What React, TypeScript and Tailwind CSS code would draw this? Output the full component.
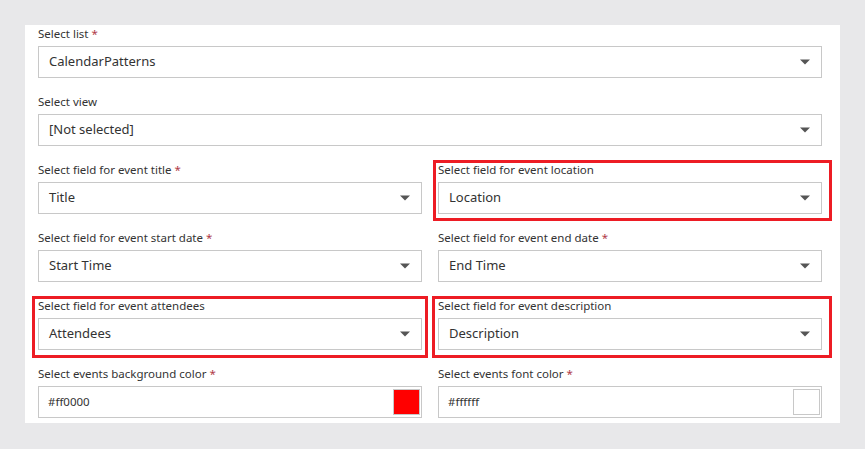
import React from "react";

type Field = {
  label: string;
  required?: boolean;
  value: string;
  kind: "select" | "color";
  swatch?: string;
  highlight?: "loc" | "att" | "desc";
};

function Caret() {
  return (
    <svg width="10" height="6" viewBox="0 0 10 6" className="shrink-0">
      <path d="M0 0.5 L10 0.5 L5 5.5 Z" fill="#555555" />
    </svg>
  );
}

function FieldView({ f }: { f: Field }) {
  return (
    <div className="relative flex flex-col">
      {f.highlight === "loc" && (
        <div className="pointer-events-none absolute left-[-5px] right-[-10px] top-[-2px] bottom-[-7px] border-[3px] border-[#ed1c24]" />
      )}
      {f.highlight === "att" && (
        <div className="pointer-events-none absolute left-[-6px] right-[-6px] top-[-2px] bottom-[-8px] border-[3px] border-[#ed1c24]" />
      )}
      {f.highlight === "desc" && (
        <div className="pointer-events-none absolute left-[-6px] right-[-10px] top-[-2px] bottom-[-8px] border-[3px] border-[#ed1c24]" />
      )}
      <div className="h-[20px] text-[11.5px] leading-[16px] text-[#333333]">
        {f.label}
        {f.required && <span className="text-[#b03a48]"> *</span>}
      </div>
      {f.kind === "select" ? (
        <div className="flex h-[32px] items-center justify-between border border-[#c8c8c8] bg-white pl-[10px] pr-[11px] text-[13px] text-[#333333]">
          <span>{f.value}</span>
          <Caret />
        </div>
      ) : (
        <div className="flex h-[32px] items-center justify-between border border-[#c8c8c8] bg-white pl-[9px] pr-[1px] text-[11.5px] text-[#333333]">
          <span>{f.value}</span>
          <div
            className="h-[26px] w-[27px] border border-[#c8c8c8]"
            style={{ backgroundColor: f.swatch }}
          />
        </div>
      )}
    </div>
  );
}

export default function App() {
  const pairs: Field[] = [
    { label: "Select field for event title", required: true, value: "Title", kind: "select" },
    { label: "Select field for event location", value: "Location", kind: "select", highlight: "loc" },
    { label: "Select field for event start date", required: true, value: "Start Time", kind: "select" },
    { label: "Select field for event end date", required: true, value: "End Time", kind: "select" },
    { label: "Select field for event attendees", value: "Attendees", kind: "select", highlight: "att" },
    { label: "Select field for event description", value: "Description", kind: "select", highlight: "desc" },
    { label: "Select events background color", required: true, value: "#ff0000", kind: "color", swatch: "#ff0000" },
    { label: "Select events font color", required: true, value: "#ffffff", kind: "color", swatch: "#ffffff" },
  ];
  return (
    <div
      className="h-[449px] w-[865px] bg-[#e8e8ea] pl-[25px] pt-[25px]"
      style={{ fontFamily: '"Segoe UI", "Noto Sans", sans-serif' }}
    >
      <div className="flex h-[398px] w-[815px] flex-col gap-[16px] bg-white pl-[13px] pr-[18px] pt-[1px]">
        <FieldView f={{ label: "Select list", required: true, value: "CalendarPatterns", kind: "select" }} />
        <FieldView f={{ label: "Select view", value: "[Not selected]", kind: "select" }} />
        <div className="grid grid-cols-2 gap-x-[16px] gap-y-[16px]">
          {pairs.map((f, i) => (
            <FieldView key={i} f={f} />
          ))}
        </div>
      </div>
    </div>
  );
}
